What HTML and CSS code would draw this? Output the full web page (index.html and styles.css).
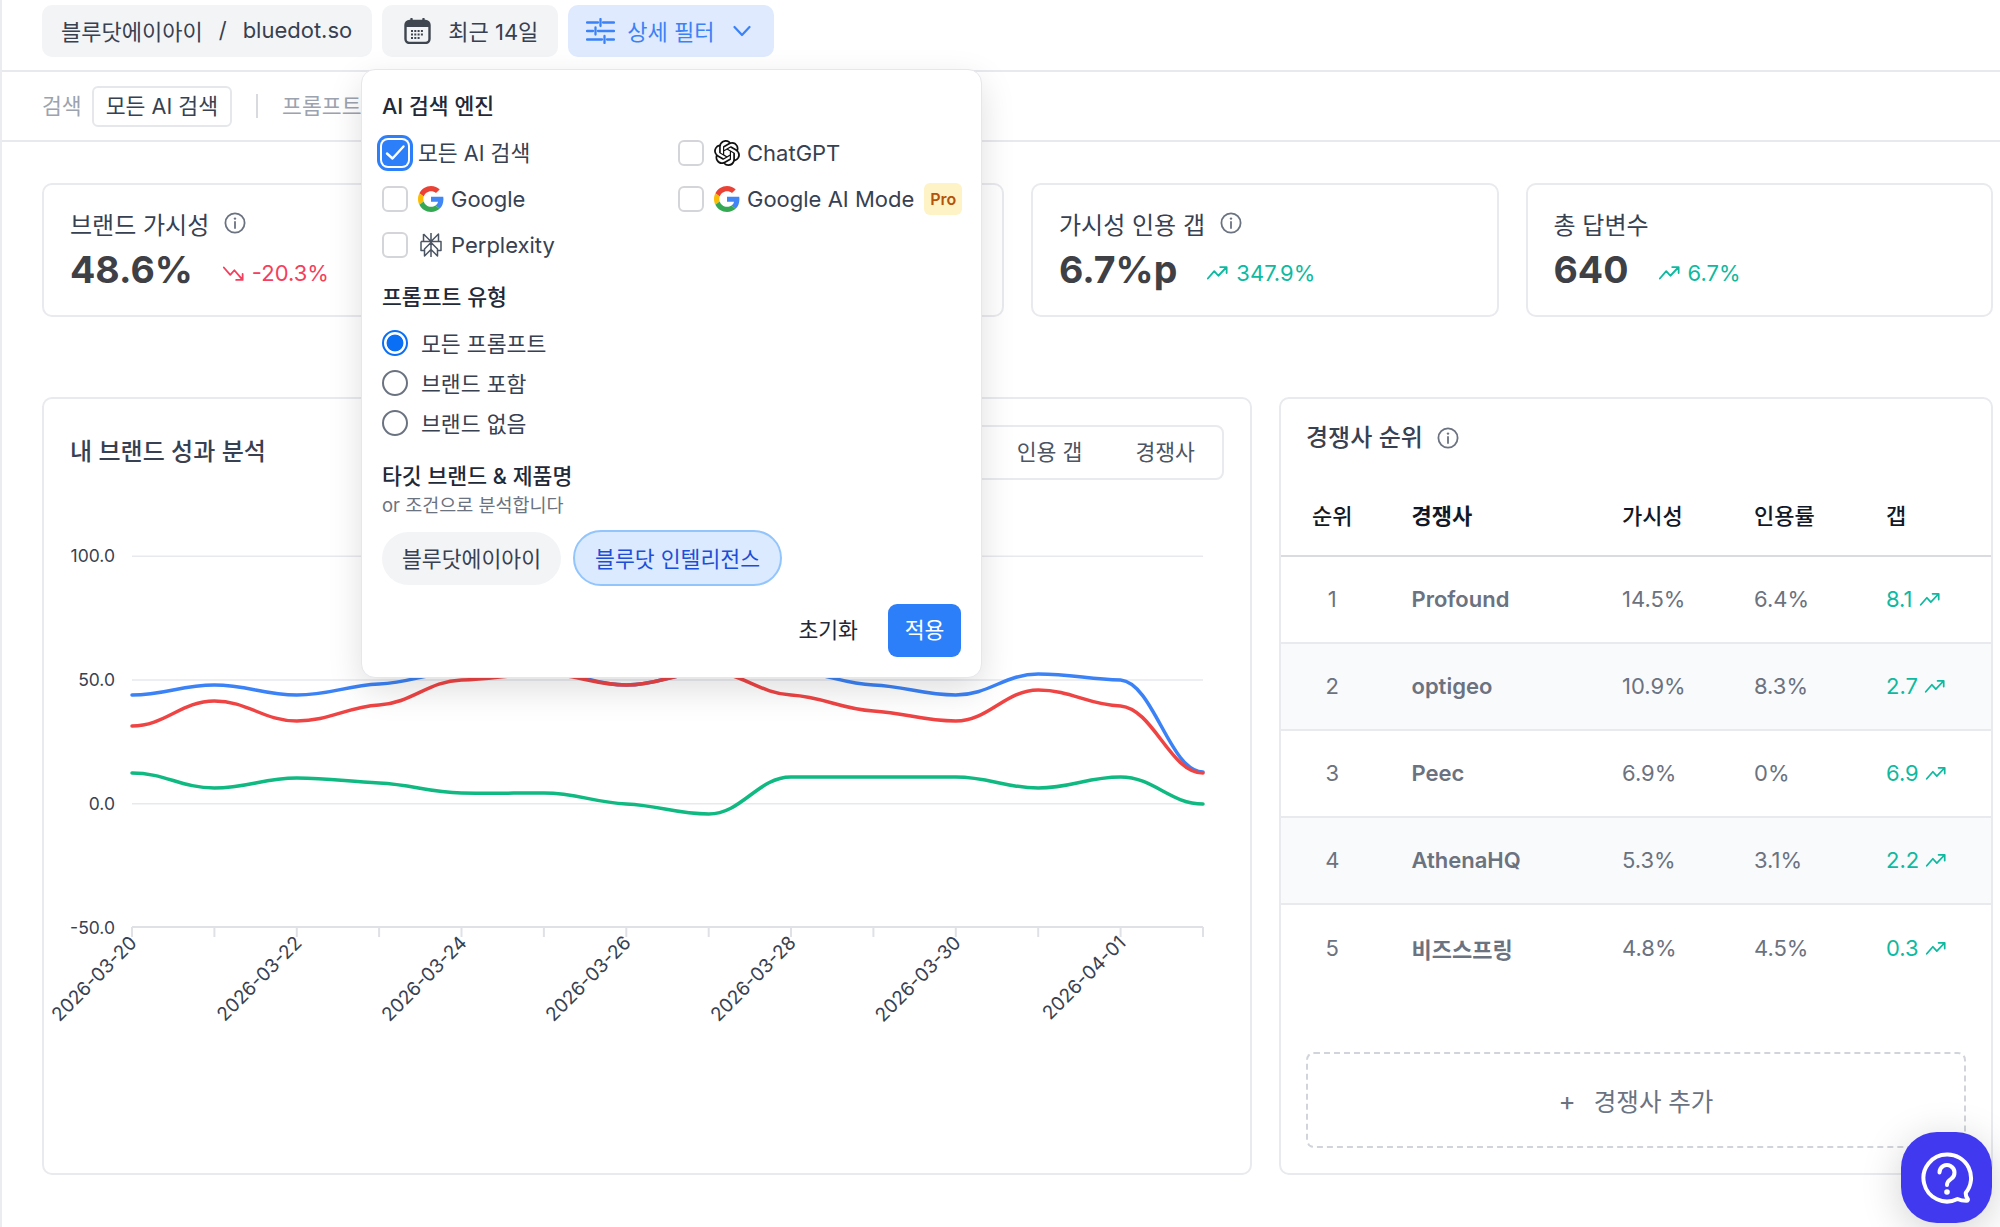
FILE: index.html
```html
<!DOCTYPE html>
<html lang="ko">
<head>
<meta charset="utf-8">
<title>블루닷에이아이</title>
<link rel="stylesheet" href="styles.css">
</head>
<body>
<svg class="sprite" aria-hidden="true">
  <symbol id="info" viewBox="0 0 22 22"><circle cx="11" cy="11" r="9.6" fill="none" stroke="currentColor" stroke-width="1.8"/><path d="M11 10v6" stroke="currentColor" stroke-width="1.8" stroke-linecap="round"/><circle cx="11" cy="6.6" r="1.2" fill="currentColor"/></symbol>
  <symbol id="up" viewBox="0 0 24 24"><path d="M2 18l7-8 4.5 5L22 6M15.5 5.5H22.500V12" fill="none" stroke="currentColor" stroke-width="2" stroke-linecap="round" stroke-linejoin="round"/></symbol>
  <symbol id="down" viewBox="0 0 24 24"><path d="M2 6l7 8 4.500-5L22 19M15.500 19.500H22.500V13" fill="none" stroke="currentColor" stroke-width="2" stroke-linecap="round" stroke-linejoin="round"/></symbol>
  <symbol id="google" viewBox="0 0 48 48">
    <path fill="#EA4335" d="M24 9.500c3.540 0 6.710 1.220 9.210 3.600l6.850-6.850C35.900 2.380 30.470 0 24 0 14.620 0 6.510 5.380 2.560 13.220l7.980 6.190C12.430 13.720 17.740 9.500 24 9.500z"/>
    <path fill="#4285F4" d="M46.980 24.550c0-1.570-.15-3.090-.38-4.550H24v9.020h12.940c-.58 2.960-2.260 5.480-4.780 7.180l7.730 6c4.510-4.180 7.090-10.360 7.090-17.650z"/>
    <path fill="#FBBC05" d="M10.530 28.590c-.48-1.450-.76-2.990-.76-4.590s.27-3.140.76-4.590l-7.980-6.190C.92 16.460 0 20.120 0 24c0 3.880.92 7.540 2.560 10.780l7.970-6.190z"/>
    <path fill="#34A853" d="M24 48c6.480 0 11.930-2.130 15.890-5.810l-7.730-6c-2.150 1.450-4.920 2.300-8.160 2.300-6.260 0-11.570-4.220-13.470-9.910l-7.980 6.190C6.510 42.620 14.620 48 24 48z"/>
  </symbol>
</svg>

<div class="app">
  <header class="topbar">
    <div class="pill pill-brand"><span>블루닷에이아이</span><span class="slash">/</span><span>bluedot.so</span></div>
    <div class="pill pill-date">
      <svg class="ico-cal" viewBox="0 0 27 26"><rect x="1.500" y="3" width="24" height="22" rx="4" fill="none" stroke="#3f4650" stroke-width="2.400"/><path d="M2 9V6.500A3.500 3.500 0 0 1 5.500 3h16A3.500 3.500 0 0 1 25 6.500V9z" fill="#3f4650"/><path d="M7.500 1v4M19.500 1v4" stroke="#3f4650" stroke-width="2.400" stroke-linecap="round"/><path d="M7 13h13M7 16.500h13M7 20h9" stroke="#3f4650" stroke-width="2" stroke-dasharray="2 1.300"/></svg>
      <span>최근 14일</span>
    </div>
    <div class="pill pill-filter">
      <svg class="ico-sliders" viewBox="0 0 29 26"><path d="M1 4.500h11M17 4.500h11M1 13h6M12 13h16M1 21.500h15M21 21.500h7M14.500 1v7M9.500 9.500v7M18.500 18v7" fill="none" stroke="currentColor" stroke-width="2.300" stroke-linecap="round"/></svg>
      <span>상세 필터</span>
      <svg class="ico-chev" viewBox="0 0 18 12"><path d="M1.500 2l7.500 8 7.500-8" fill="none" stroke="currentColor" stroke-width="2.200" stroke-linecap="round" stroke-linejoin="round"/></svg>
    </div>
  </header>

  <div class="subbar">
    <span class="sub-label">검색</span>
    <span class="sub-chip">모든 AI 검색</span>
    <span class="sub-divider"></span>
    <span class="sub-label">프롬프트</span>
  </div>

  <main class="main">
    <section class="metrics">
      <article class="card metric">
        <div class="metric-label"><span>브랜드 가시성</span><svg class="ico-info"><use href="#info"/></svg></div>
        <div class="metric-row"><span class="metric-value">48.6%</span><span class="delta delta-down"><svg class="ico-trend"><use href="#down"/></svg>-20.3%</span></div>
      </article>
      <article class="card metric">
        <div class="metric-label"><span>인용률</span><svg class="ico-info"><use href="#info"/></svg></div>
        <div class="metric-row"><span class="metric-value">6.7%</span></div>
      </article>
      <article class="card metric">
        <div class="metric-label"><span>가시성 인용 갭</span><svg class="ico-info"><use href="#info"/></svg></div>
        <div class="metric-row"><span class="metric-value">6.7%p</span><span class="delta delta-up"><svg class="ico-trend"><use href="#up"/></svg>347.9%</span></div>
      </article>
      <article class="card metric">
        <div class="metric-label"><span>총 답변수</span></div>
        <div class="metric-row"><span class="metric-value">640</span><span class="delta delta-up"><svg class="ico-trend"><use href="#up"/></svg>6.7%</span></div>
      </article>
    </section>

    <section class="panels">
      <article class="card chart-card">
        <div class="chart-head">
          <h2 class="card-title">내 브랜드 성과 분석</h2>
          <div class="tabs"><span class="tab">가시성</span><span class="tab">인용률</span><span class="tab">인용 갭</span><span class="tab">경쟁사</span></div>
        </div>
        <svg class="chart" viewBox="44 500 1205 673">
          <g class="grid-lines">
            <path d="M132 556.300H1203M132 680H1203M132 803.700H1203"/>
          </g>
          <path class="axis" d="M132 927H1203M132 927v10M214.400 927v10M296.800 927v10M379.100 927v10M461.500 927v10M543.900 927v10M626.300 927v10M708.700 927v10M791 927v10M873.400 927v10M955.800 927v10M1038.200 927v10M1120.600 927v10M1203 927v10"/>
          <g class="y-labels">
            <text x="115" y="562">100.0</text>
            <text x="115" y="686">50.0</text>
            <text x="115" y="810">0.0</text>
            <text x="115" y="934">-50.0</text>
          </g>
          <path class="line line-blue" d="M132 695C165 695 181.400 685 214.400 685C247.400 685 263.800 695 296.800 695C329.800 695 346.100 685.500 379.100 684C412.100 682.500 428.500 672 461.500 672C494.500 672 510.900 672 543.900 672C576.900 672 593.300 685 626.300 685C659.300 685 675.700 672 708.700 672C741.700 672 758 672 791 672C824 672 840.400 683.500 873.400 685C906.400 686.500 922.800 695 955.800 695C988.800 695 1005.200 674 1038.200 674C1071.200 674 1087.600 679 1120.600 680C1153.600 683 1170 772 1203 772"/>
          <path class="line line-red" d="M132 726C165 726 181.400 701 214.400 701C247.400 701 263.800 721 296.800 721C329.800 721 346.100 707 379.100 705C412.100 703 428.500 681 461.500 680C494.500 679 510.900 674 543.900 674C576.900 674 593.300 685 626.300 685C659.300 685 675.700 672 708.700 672C741.700 672 758 693 791 695C824 697 840.400 709 873.400 711C906.400 713 922.800 721 955.800 721C988.800 721 1005.200 690 1038.200 690C1071.200 690 1087.600 705 1120.600 706C1153.600 709 1170 773 1203 773"/>
          <path class="line line-green" d="M132 773C165 773 181.400 788 214.400 788C247.400 788 263.800 778 296.800 778C329.800 778 346.100 781.500 379.100 783C412.100 784.500 428.500 792.500 461.500 793C494.500 793.500 510.900 793 543.900 793C576.900 793 593.300 802.500 626.300 804C659.300 805.500 675.700 814 708.700 814C741.700 814 758 777 791 777C824 777 840.400 777 873.400 777C906.400 777 922.800 777 955.800 777C988.800 777 1005.200 788 1038.200 788C1071.200 788 1087.600 777 1120.600 777C1153.600 777 1170 804 1203 804"/>
          <g class="x-labels">
            <text transform="translate(138 944) rotate(-45)">2026-03-20</text>
            <text transform="translate(303 944) rotate(-45)">2026-03-22</text>
            <text transform="translate(468 944) rotate(-45)">2026-03-24</text>
            <text transform="translate(632 944) rotate(-45)">2026-03-26</text>
            <text transform="translate(797 944) rotate(-45)">2026-03-28</text>
            <text transform="translate(962 944) rotate(-45)">2026-03-30</text>
            <text transform="translate(1127 944) rotate(-45)">2026-04-01</text>
          </g>
        </svg>
      </article>

      <article class="card rank-card">
        <div class="rank-title"><h2 class="card-title">경쟁사 순위</h2><svg class="ico-info"><use href="#info"/></svg></div>
        <table class="rank-table">
          <thead>
            <tr><th class="c-rank">순위</th><th class="c-name">경쟁사</th><th class="c-num">가시성</th><th class="c-num">인용률</th><th>갭</th></tr>
          </thead>
          <tbody>
            <tr><td class="c-rank">1</td><td class="c-name">Profound</td><td>14.5%</td><td>6.4%</td><td class="gap">8.1<svg class="ico-gap"><use href="#up"/></svg></td></tr>
            <tr><td class="c-rank">2</td><td class="c-name">optigeo</td><td>10.9%</td><td>8.3%</td><td class="gap">2.7<svg class="ico-gap"><use href="#up"/></svg></td></tr>
            <tr><td class="c-rank">3</td><td class="c-name">Peec</td><td>6.9%</td><td>0%</td><td class="gap">6.9<svg class="ico-gap"><use href="#up"/></svg></td></tr>
            <tr><td class="c-rank">4</td><td class="c-name">AthenaHQ</td><td>5.3%</td><td>3.1%</td><td class="gap">2.2<svg class="ico-gap"><use href="#up"/></svg></td></tr>
            <tr><td class="c-rank">5</td><td class="c-name">비즈스프링</td><td>4.8%</td><td>4.5%</td><td class="gap">0.3<svg class="ico-gap"><use href="#up"/></svg></td></tr>
          </tbody>
        </table>
        <div class="add-row"><span class="add-plus">+</span><span>경쟁사 추가</span></div>
      </article>
    </section>
  </main>

  <aside class="popover">
    <h3 class="pop-title">AI 검색 엔진</h3>
    <div class="engine-grid">
      <label class="engine"><span class="check check-on"><svg viewBox="0 0 26 26"><path d="M5 13.500l5.500 5L21.500 6.500" fill="none" stroke="#fff" stroke-width="2.400" stroke-linecap="round" stroke-linejoin="round"/></svg></span><span class="all-label">모든 AI 검색</span></label>
      <label class="engine"><span class="check"></span><svg class="logo" viewBox="0 0 24 24"><path fill="#111" d="M22.2819 9.8211a5.9847 5.9847 0 0 0-.5157-4.9108 6.0462 6.0462 0 0 0-6.5098-2.9A6.0651 6.0651 0 0 0 4.9807 4.1818a5.9847 5.9847 0 0 0-3.9977 2.9 6.0462 6.0462 0 0 0 .7427 7.0966 5.98 5.98 0 0 0 .511 4.9107 6.051 6.051 0 0 0 6.5146 2.9001A5.9847 5.9847 0 0 0 13.2599 24a6.0557 6.0557 0 0 0 5.7718-4.2058 5.9894 5.9894 0 0 0 3.9977-2.9001 6.0557 6.0557 0 0 0-.7475-7.0729zm-9.022 12.6081a4.4755 4.4755 0 0 1-2.8764-1.0408l.1419-.0804 4.7783-2.7582a.7948.7948 0 0 0 .3927-.6813v-6.7369l2.02 1.1686a.071.071 0 0 1 .038.052v5.5826a4.504 4.504 0 0 1-4.4945 4.4944zm-9.6607-4.1254a4.4708 4.4708 0 0 1-.5346-3.0137l.142.0852 4.783 2.7582a.7712.7712 0 0 0 .7806 0l5.8428-3.3685v2.3324a.0804.0804 0 0 1-.0332.0615L9.74 19.9502a4.4992 4.4992 0 0 1-6.1408-1.6464zM2.3408 7.8956a4.485 4.485 0 0 1 2.3655-1.9728V11.6a.7664.7664 0 0 0 .3879.6765l5.8144 3.3543-2.0201 1.1685a.0757.0757 0 0 1-.071 0l-4.8303-2.7865A4.504 4.504 0 0 1 2.3408 7.872zm16.5963 3.8558L13.1038 8.364 15.1192 7.2a.0757.0757 0 0 1 .071 0l4.8303 2.7913a4.4944 4.4944 0 0 1-.6765 8.1042v-5.6772a.79.79 0 0 0-.407-.667zm2.0107-3.0231l-.142-.0852-4.7735-2.7818a.7759.7759 0 0 0-.7854 0L9.409 9.2297V6.8974a.0662.0662 0 0 1 .0284-.0615l4.8303-2.7866a4.4992 4.4992 0 0 1 6.6802 4.66zM8.3065 12.863l-2.02-1.1638a.0804.0804 0 0 1-.038-.0567V6.0742a4.4992 4.4992 0 0 1 7.3757-3.4537l-.142.0805L8.704 5.459a.7948.7948 0 0 0-.3927.6813zm1.0976-2.3654l2.602-1.4998 2.6069 1.4998v2.9994l-2.5974 1.4997-2.6067-1.4997Z"/></svg><span class="name">ChatGPT</span></label>
      <label class="engine"><span class="check"></span><svg class="logo"><use href="#google"/></svg><span class="name">Google</span></label>
      <label class="engine"><span class="check"></span><svg class="logo"><use href="#google"/></svg><span class="name">Google AI Mode</span><span class="pro">Pro</span></label>
      <label class="engine"><span class="check"></span><svg class="logo logo-perp" viewBox="0 0 24 26"><path d="M12 1v24M4.500 2L12 9.500 19.500 2v7.500M4.500 2v7.500M2 9.500h20v9h-3.500M2 9.500v9h3.500M12 10.500l-6.500 6.500v7l6.500-6.500M12 10.500l6.500 6.500v7L12 17.500" fill="none" stroke="currentColor" stroke-width="1.500" stroke-linejoin="round"/></svg><span class="name">Perplexity</span></label>
    </div>

    <h3 class="pop-title pop-title-prompt">프롬프트 유형</h3>
    <div class="radio-list">
      <label class="radio-row"><span class="radio radio-on"></span><span class="radio-text">모든 프롬프트</span></label>
      <label class="radio-row"><span class="radio"></span><span class="radio-text">브랜드 포함</span></label>
      <label class="radio-row"><span class="radio"></span><span class="radio-text">브랜드 없음</span></label>
    </div>

    <h3 class="pop-title pop-title-target">타깃 브랜드 &amp; 제품명</h3>
    <p class="pop-note">or 조건으로 분석합니다</p>
    <div class="chip-row">
      <span class="chip">블루닷에이아이</span>
      <span class="chip chip-on">블루닷 인텔리전스</span>
    </div>
    <div class="pop-actions">
      <span class="btn-reset">초기화</span>
      <span class="btn-apply">적용</span>
    </div>
  </aside>

  <div class="fab">
    <svg viewBox="0 0 56 56"><path d="M28 4.500a23.500 23.500 0 1 0 10.500 44.500c2.500 1.200 5.500 1.800 8.800 1.800 1.500 0 2-1.300 1.200-2.300-1.300-1.600-1.900-3.500-1.700-5.700A23.500 23.500 0 0 0 28 4.500z" fill="none" stroke="#fff" stroke-width="4" stroke-linejoin="round"/><path d="M20.500 22.500a7.500 7.500 0 1 1 11.600 6.300c-2.600 1.700-4.100 3-4.100 6.200" fill="none" stroke="#fff" stroke-width="4" stroke-linecap="round"/><circle cx="28" cy="42" r="2.800" fill="#fff"/></svg>
  </div>
</div>
</body>
</html>
```

FILE: styles.css
```css
* { box-sizing: border-box; }
html, body { margin: 0; padding: 0; background: #fff; }
body {
  font-family: "Inter", "Noto Sans CJK KR", sans-serif;
  color: #374151;
  font-size: 22px;
}
h2, h3, p { margin: 0; font-weight: 500; }
.sprite { display: none; }

.app {
  position: relative;
  width: 2000px;
  height: 1227px;
  overflow: hidden;
  border-left: 2px solid #ebecef;
}

/* top bar */
.topbar {
  height: 72px;
  padding: 5px 0 0 40px;
  display: flex;
  gap: 10px;
  border-bottom: 2px solid #e8e9ec;
}
.pill {
  height: 52px;
  border-radius: 10px;
  background: #f3f4f6;
  display: flex;
  align-items: center;
  color: #374151;
}
.pill > span { margin-bottom: 3px; }
.pill-brand { padding: 0 20px 0 19px; }
.slash { margin: 0 16px; }
.pill-date { padding: 0 20px 0 22px; gap: 17px; }
.ico-cal { width: 27px; height: 26px; }
.pill-filter { padding: 0 23px 0 18px; background: #dfeafe; color: #3b82f6; gap: 12px; }
.ico-sliders { width: 29px; height: 26px; }
.ico-chev { width: 18px; height: 12px; margin-left: 6px; }

/* filter summary */
.subbar {
  height: 70px;
  padding-left: 40px;
  display: flex;
  align-items: center;
  border-bottom: 2px solid #e8e9ec;
  font-size: 21.600px;
}
.sub-label { color: #9ca3af; margin-bottom: 3px; }
.sub-chip {
  height: 41px;
  margin-left: 10px;
  padding: 0 12px 3px;
  display: flex;
  align-items: center;
  border: 2px solid #e5e7eb;
  border-radius: 6px;
  color: #374151;
}
.sub-divider { width: 2px; height: 24px; margin: 0 24px; background: #d8dadf; }

/* main */
.main { padding: 41px 7px 0 40px; }
.card { border: 2px solid #e9eaee; border-radius: 10px; background: #fff; }
.metrics { display: grid; grid-template-columns: repeat(4, 1fr); gap: 27px; }
.metric { height: 134px; padding: 23px 26px 0; }
.metric-label { display: flex; align-items: center; gap: 15px; height: 30px; font-size: 24px; color: #374151; }
.ico-info { width: 22px; height: 22px; color: #6b7280; flex: none; }
.metric-row { display: flex; align-items: center; margin-top: 9px; height: 46px; }
.metric-value { font-size: 37.500px; font-weight: 700; color: #3f3f46; line-height: 46px; margin-right: 29px; }
.delta { display: flex; align-items: center; gap: 8px; font-size: 22px; margin-top: 6px; }
.delta-up { color: #0fb9a0; }
.delta-down { color: #f43f5e; }
.ico-trend { width: 22px; height: 22px; flex: none; }

.panels { display: grid; grid-template-columns: 1210px 714px; gap: 27px; margin-top: 80px; }
.chart-card, .rank-card { height: 778px; }
.chart-head {
  height: 101px;
  padding: 26px 26px 0 26px;
  display: flex;
  align-items: flex-start;
  justify-content: space-between;
}
.card-title { font-size: 24px; font-weight: 500; color: #374151; line-height: 30px; }
.chart-head .card-title { margin-top: 12px; }
.tabs {
  height: 55px;
  padding: 0 27px 4px;
  display: flex;
  align-items: center;
  gap: 53px;
  border: 2px solid #e9eaee;
  border-radius: 8px;
  color: #4b5563;
  font-size: 21.600px;
}
.chart { display: block; width: 1205px; height: 673px; }
.grid-lines path { stroke: #e8e9ee; stroke-width: 1.5; fill: none; }
.axis { stroke: #dfe1e7; stroke-width: 2; fill: none; }
.line { fill: none; stroke-width: 3.5; stroke-linecap: round; stroke-linejoin: round; }
.line-blue { stroke: #3b82f6; }
.line-red { stroke: #ef4444; }
.line-green { stroke: #10b981; }
.y-labels text { font-size: 17.5px; fill: #374151; text-anchor: end; }
.x-labels text { font-size: 19px; fill: #374151; text-anchor: end; }

/* ranking */
.rank-title { display: flex; align-items: center; gap: 14px; height: 30px; margin: 24px 0 23px 25px; }
.rank-table { width: 100%; border-collapse: separate; border-spacing: 0; table-layout: fixed; }
.rank-table th {
  height: 81px;
  padding: 0 0 4px;
  text-align: left;
  font-weight: 500;
  color: #111827;
  border-bottom: 2px solid #d9dbe0;
}
.rank-table td {
  height: 87px;
  padding: 0 0 2px;
  color: #6b7280;
  border-bottom: 2px solid #e9eaee;
}
.rank-table tbody tr:nth-child(even) td { background: #f9fafb; }
.rank-table tbody tr:last-child td { border-bottom: 0; }
.rank-table .c-rank { width: 130.500px; padding-right: 28px; text-align: center; }
.rank-table .c-name { width: 210.500px; font-weight: 600; }
.rank-table .c-num { width: 132px; }
.rank-table .gap { color: #0fb9a0; }
.ico-gap { width: 21px; height: 21px; margin-left: 6px; vertical-align: -3px; }
.add-row {
  height: 96px;
  margin: 60px 25px 0;
  display: flex;
  align-items: center;
  justify-content: center;
  gap: 18px;
  border: 2px dashed #d1d5db;
  border-radius: 8px;
  font-size: 24.500px;
  color: #6b7280;
}
.add-plus { font-size: 26px; font-weight: 400; }

/* popover */
.popover {
  position: absolute;
  left: 359px;
  top: 69px;
  width: 621px;
  height: 609px;
  padding: 22px 20px 0;
  background: #fff;
  border: 1.500px solid #e6e7eb;
  border-radius: 14px;
  box-shadow: 0 12px 34px rgba(0, 0, 0, .13);
}
.pop-title { font-size: 21.600px; font-weight: 500; line-height: 28px; color: #1f2937; }
.engine-grid {
  margin-top: 10px;
  display: grid;
  grid-template-columns: 296px 1fr;
  grid-auto-rows: 46px;
}
.engine { display: flex; align-items: center; gap: 10px; color: #374151; white-space: nowrap; }
.all-label { font-size: 21.600px; margin-bottom: 3px; }
.name { margin-bottom: 1px; }
.check {
  width: 26px;
  height: 26px;
  flex: none;
  border: 2px solid #d4d5d9;
  border-radius: 6px;
  background: #fff;
}
.check-on {
  background: #2d7ff9;
  border: 0;
  box-shadow: 0 0 0 2px #fff, 0 0 0 5px #2d7ff9;
}
.check-on svg { display: block; width: 26px; height: 26px; }
.logo { width: 26px; height: 26px; flex: none; }
.engine .logo + .name { margin-left: -3px; }
.logo-perp { color: #4b5563; }
.pro {
  width: 38px;
  height: 32px;
  flex: none;
  display: flex;
  align-items: center;
  justify-content: center;
  border-radius: 6px;
  background: #fef3c7;
  color: #b45309;
  font-size: 16px;
  font-weight: 600;
}
.pop-title-prompt { margin-top: 15px; }
.radio-list { margin-top: 12px; display: grid; grid-auto-rows: 40px; }
.radio-row { display: flex; align-items: center; gap: 13px; color: #374151; }
.radio-text { font-size: 21.600px; margin-bottom: 2px; }
.radio {
  width: 26px;
  height: 26px;
  flex: none;
  border: 2px solid #6b7280;
  border-radius: 50%;
  background: #fff;
}
.radio-on { border-color: #0b6ff5; background: radial-gradient(circle, #0b6ff5 0 8px, #fff 8.800px); }
.pop-title-target { margin-top: 19px; }
.pop-note { margin-top: 2px; font-size: 18.500px; font-weight: 400; line-height: 26px; color: #6b7280; }
.chip-row { margin-top: 12px; display: flex; align-items: center; gap: 12px; height: 56px; font-size: 21.600px; }
.chip {
  height: 53px;
  padding: 0 20px 2px;
  display: flex;
  align-items: center;
  border-radius: 27px;
  background: #f3f4f6;
  color: #374151;
}
.chip-on {
  height: 56px;
  border-radius: 28px;
  background: #dbeafe;
  border: 2px solid #93c5fd;
  color: #1d4ed8;
}
.pop-actions { margin-top: 18px; display: flex; align-items: center; justify-content: flex-end; gap: 30px; font-size: 21.600px; }
.btn-reset { color: #1f2937; margin-bottom: 4px; }
.btn-apply {
  width: 73px;
  height: 53px;
  padding-bottom: 4px;
  display: flex;
  align-items: center;
  justify-content: center;
  border-radius: 9px;
  background: #2d7ff9;
  color: #fff;
}

/* help button */
.fab {
  position: absolute;
  left: 1899px;
  top: 1132px;
  width: 91px;
  height: 91px;
  display: flex;
  align-items: center;
  justify-content: center;
  border-radius: 36px;
  background: #4039ef;
  box-shadow: 0 8px 40px rgba(0, 0, 0, .18);
}
.fab svg { width: 56px; height: 56px; }
```
